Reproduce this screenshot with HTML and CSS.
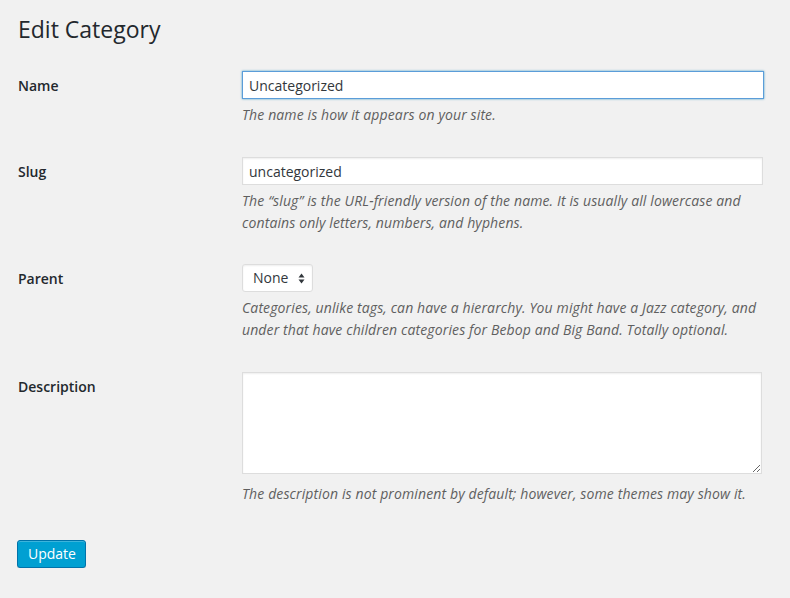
FILE: index.html
```html
<!DOCTYPE html>
<html lang="en">
<head>
<meta charset="utf-8">
<title>Edit Category</title>
<link rel="stylesheet" href="styles.css">
</head>
<body>
<div class="wrap">
  <h1 class="title">Edit Category</h1>
  <form class="form">
    <div class="row row-name">
      <label class="label" for="name">Name</label>
      <div class="field">
        <input id="name" class="text-input focused" type="text" value="Uncategorized">
        <p class="description">The name is how it appears on your site.</p>
      </div>
    </div>
    <div class="row row-slug">
      <label class="label" for="slug">Slug</label>
      <div class="field">
        <input id="slug" class="text-input slug" type="text" value="uncategorized">
        <p class="description">The “slug” is the URL-friendly version of the name. It is usually all lowercase and contains only letters, numbers, and hyphens.</p>
      </div>
    </div>
    <div class="row">
      <label class="label" for="parent">Parent</label>
      <div class="field">
        <div class="select">
          <span class="select-value">None</span>
          <svg class="select-arrows" width="7" height="11" viewBox="0 0 7 11"><path d="M3.5 0.5 L6.5 4.5 H0.5 Z" fill="#32373c"/><path d="M3.5 10.5 L6.5 6.5 H0.5 Z" fill="#32373c"/></svg>
        </div>
        <p class="description">Categories, unlike tags, can have a hierarchy. You might have a Jazz category, and under that have children categories for Bebop and Big Band. Totally optional.</p>
      </div>
    </div>
    <div class="row row-last">
      <label class="label" for="desc">Description</label>
      <div class="field">
        <textarea id="desc" class="textarea"></textarea>
        <p class="description desc-last">The description is not prominent by default; however, some themes may show it.</p>
      </div>
    </div>
    <div class="submit">
      <button type="button" class="button-primary">Update</button>
    </div>
  </form>
</div>
</body>
</html>
```

FILE: styles.css
```css
html, body {
  margin: 0;
  padding: 0;
  background: #f1f1f1;
}
body {
  font-family: "Open Sans", "Liberation Sans", sans-serif;
  color: #444;
  font-size: 13px;
}
.wrap {
  padding: 15px 0 0 18px;
}
.title {
  margin: 0;
  font-size: 23px;
  font-weight: 400;
  line-height: 29px;
  color: #23282d;
}
.form {
  display: flex;
  flex-direction: column;
  margin-top: 27px;
}
.row {
  display: grid;
  grid-template-columns: 224px 1fr;
  align-items: start;
  margin-bottom: 31px;
}
.row-slug {
  margin-bottom: 30px;
}
.label {
  font-size: 14px;
  font-weight: 600;
  line-height: 30px;
  color: #23282d;
}
.field {
  display: flex;
  flex-direction: column;
  align-items: flex-start;
}
.text-input {
  box-sizing: border-box;
  width: 522px;
  height: 28px;
  margin: 0;
  padding: 0 6px;
  border: 1px solid #ddd;
  background: #fff;
  box-shadow: inset 0 1px 2px rgba(0,0,0,.07);
  font-family: "Open Sans", "Liberation Sans", sans-serif;
  font-size: 14px;
  color: #32373c;
  outline: none;
}
.text-input.slug {
  width: 521px;
}
.text-input.focused {
  border-color: #5b9dd9;
  box-shadow: 0 0 2px rgba(30,140,190,.8);
}
.description {
  margin: 5px 0 0;
  font-size: 14px;
  font-style: italic;
  line-height: 22px;
  letter-spacing: 0.12px;
  color: #5f5f5f;
  width: 530px;
}
.select {
  box-sizing: border-box;
  display: flex;
  align-items: center;
  justify-content: space-between;
  width: 71px;
  height: 28px;
  padding: 0 7px 0 10px;
  border: 1px solid #ddd;
  border-radius: 3px;
  background: #fff;
  box-shadow: inset 0 1px 2px rgba(0,0,0,.07);
  font-size: 14px;
  color: #32373c;
}
.select-value {
  line-height: 26px;
}
.select-arrows {
  display: block;
}
.textarea {
  box-sizing: border-box;
  display: block;
  width: 520px;
  height: 102px;
  margin: 0;
  border: 1px solid #ddd;
  background: #fff;
  box-shadow: inset 0 1px 2px rgba(0,0,0,.07);
  font-family: "Open Sans", "Liberation Sans", sans-serif;
  outline: none;
}
.desc-last {
  margin-top: 9px;
}
.row-last {
  margin-bottom: 35px;
}
.submit {
  margin-left: -1px;
}
.button-primary {
  box-sizing: border-box;
  height: 28px;
  width: 69px;
  padding: 0 10px 1px;
  border: 1px solid #0073aa;
  border-radius: 3px;
  background: #00a0d2;
  box-shadow: inset 0 1px 0 rgba(120,200,230,.5), 0 1px 0 rgba(0,0,0,.15);
  color: #fff;
  font-family: "Open Sans", "Liberation Sans", sans-serif;
  font-size: 14px;
  line-height: 26px;
}
```
